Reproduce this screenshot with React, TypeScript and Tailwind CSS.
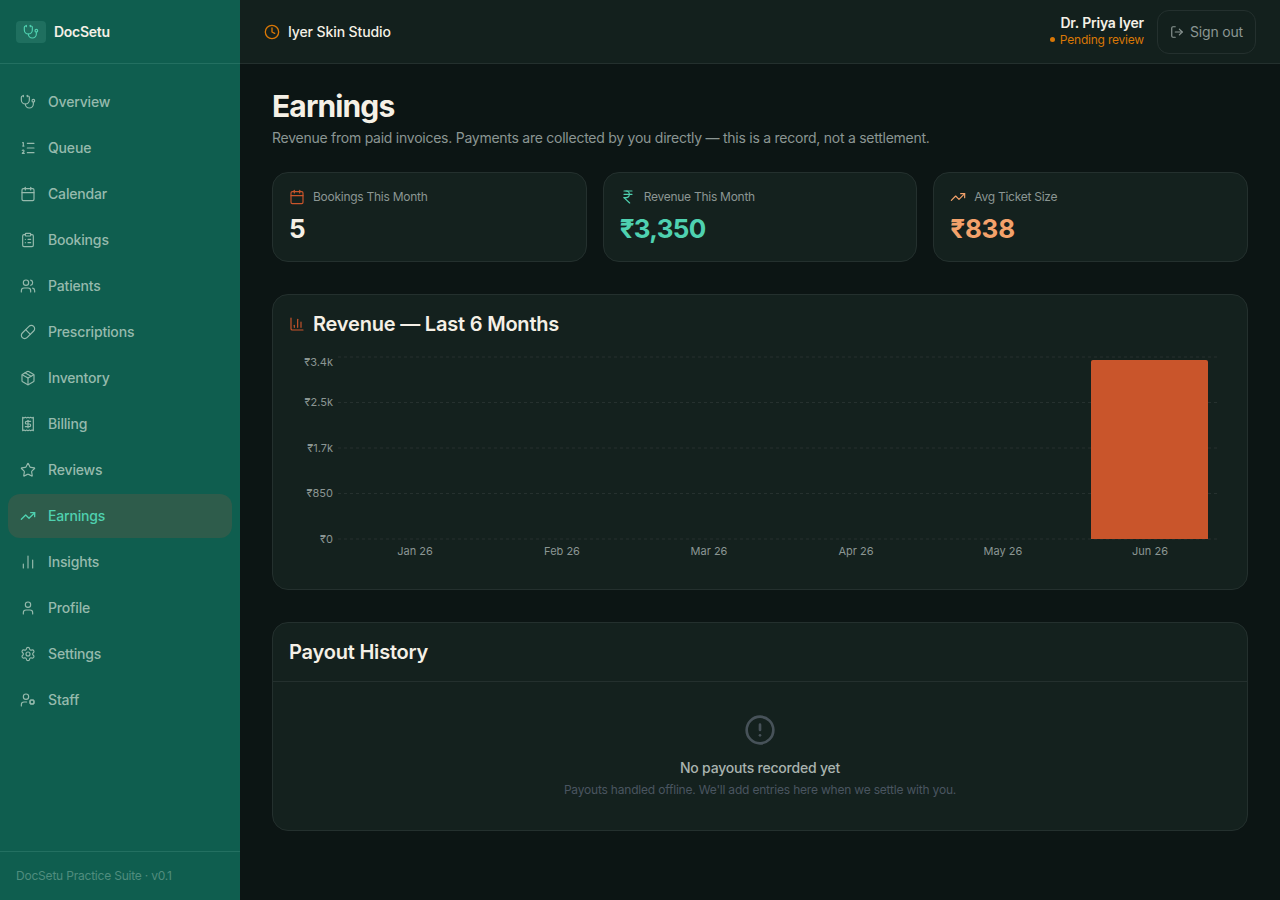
import {
  Calendar,
  ChartColumn,
  ChartNoAxesColumn,
  CircleAlert,
  ClipboardList,
  Clock,
  IndianRupee,
  ListOrdered,
  LogOut,
  Package,
  Pill,
  Receipt,
  Settings,
  Star,
  Stethoscope,
  TrendingUp,
  User,
  UserCog,
  Users,
} from "lucide-react";

const navItems = [
  { label: "Overview", icon: Stethoscope },
  { label: "Queue", icon: ListOrdered },
  { label: "Calendar", icon: Calendar },
  { label: "Bookings", icon: ClipboardList },
  { label: "Patients", icon: Users },
  { label: "Prescriptions", icon: Pill },
  { label: "Inventory", icon: Package },
  { label: "Billing", icon: Receipt },
  { label: "Reviews", icon: Star },
  { label: "Earnings", icon: TrendingUp, active: true },
  { label: "Insights", icon: ChartNoAxesColumn },
  { label: "Profile", icon: User },
  { label: "Settings", icon: Settings },
  { label: "Staff", icon: UserCog },
];

function Sidebar() {
  return (
    <aside className="w-[240px] h-[900px] shrink-0 flex flex-col bg-[#0f5e4f]">
      {/* Logo */}
      <div className="h-[64px] shrink-0 flex items-center gap-2 px-4 border-b border-[#237061]">
        <div className="w-[30px] h-[22px] rounded-[4px] bg-[#1f6f5f] flex items-center justify-center">
          <Stethoscope size={16} strokeWidth={1.75} className="text-[#4fd1b0]" />
        </div>
        <span className="text-sm font-semibold tracking-[-0.02em] text-[#f5f0e6]">DocSetu</span>
      </div>

      {/* Navigation Links */}
      <nav className="flex-1 flex flex-col gap-[2px] px-2 py-4">
        {navItems.map((item) => {
          const Icon = item.icon;
          return (
            <div
              key={item.label}
              className={
                item.active
                  ? "h-[44px] flex items-center gap-3 px-3 rounded-xl bg-[#2e5c4b] text-[#4fd1b0] text-sm font-medium tracking-[-0.012em]"
                  : "h-[44px] flex items-center gap-3 px-3 rounded-xl text-[#96baad] text-sm font-medium tracking-[-0.012em]"
              }
            >
              <Icon size={16} strokeWidth={item.active ? 2 : 1.75} />
              <span>{item.label}</span>
            </div>
          );
        })}
      </nav>

      <div className="h-[49px] shrink-0 flex items-center px-4 border-t border-[#237061] text-xs tracking-[-0.017em] text-[#4f8d7e]">
        DocSetu Practice Suite · v0.1
      </div>
    </aside>
  );
}

function Header() {
  return (
    <header className="h-[64px] shrink-0 flex items-center justify-between px-6 bg-[#13201d] border-b border-[#24302e]">
      <div className="flex items-center gap-2">
        <Clock size={16} className="text-[#d97706]" />
        <span className="text-sm font-medium tracking-[-0.1px] text-[#f5f0e6]">Iyer Skin Studio</span>
      </div>
      <div className="flex items-center gap-[13px]">
        <div className="flex flex-col items-end -mt-[2px]">
          <span className="text-sm leading-[18px] font-semibold tracking-[-0.015em] text-[#f5f0e6]">Dr. Priya Iyer</span>
          <span className="flex items-center gap-[5px] text-xs leading-[16px] tracking-[-0.018em] text-[#d97706]">
            <span className="w-[5px] h-[5px] rounded-full bg-[#d97706]" />
            Pending review
          </span>
        </div>
        <button className="h-[44px] flex items-center gap-[6px] px-3 rounded-xl border border-[#24302e] text-sm tracking-[-0.012em] text-[#8b9693]">
          <LogOut size={14} />
          Sign out
        </button>
      </div>
    </header>
  );
}

function StatCard({
  icon: Icon,
  iconClass,
  label,
  value,
  valueClass,
}: {
  icon: typeof Calendar;
  iconClass: string;
  label: string;
  value: string;
  valueClass: string;
}) {
  return (
    <div className="h-[90px] flex-1 rounded-2xl bg-[#14211e] border border-[#24302e] px-4 pt-4">
      <div className="h-[15px] flex items-center gap-2">
        <Icon size={16} strokeWidth={1.75} className={iconClass} />
        <span className="text-xs tracking-[-0.022em] text-[#8b9693]">{label}</span>
      </div>
      <div className={"mt-[9px] text-[26px] font-bold leading-8 " + valueClass}>{value}</div>
    </div>
  );
}

const yTicks = [
  { label: "₹3.4k", lineY: 4, textY: 13 },
  { label: "₹2.5k", lineY: 49.5, textY: 53 },
  { label: "₹1.7k", lineY: 95, textY: 99 },
  { label: "₹850", lineY: 140.5, textY: 144 },
  { label: "₹0", lineY: 186, textY: 190 },
];

const months = [
  { label: "Jan 26", x: 142 },
  { label: "Feb 26", x: 289 },
  { label: "Mar 26", x: 436 },
  { label: "Apr 26", x: 583 },
  { label: "May 26", x: 730 },
  { label: "Jun 26", x: 877 },
];

function RevenueChart() {
  return (
    <section className="h-[296px] rounded-2xl bg-[#14211e] border border-[#24302e]">
      <div className="h-[58px] flex items-center gap-2 px-4">
        <ChartColumn size={16} strokeWidth={1.75} className="text-[#c9552b]" />
        <h2 className="text-xl font-semibold tracking-[-0.2px] text-[#f5f0e6]">Revenue — Last 6 Months</h2>
      </div>
      <svg width="974" height="236" viewBox="0 0 974 236" className="block">
        {yTicks.map((t) => (
          <line key={t.label} x1="65" x2="947" y1={t.lineY} y2={t.lineY} stroke="#26312f" strokeDasharray="3 3" />
        ))}
        <path d="M818 186V9a2 2 0 0 1 2-2h113a2 2 0 0 1 2 2v177z" fill="#c9552b" />
        {yTicks.map((t) => (
          <text key={t.label} x="60" y={t.textY} textAnchor="end" fontSize="11" fill="#8b9693" fontFamily="Inter, sans-serif">
            {t.label}
          </text>
        ))}
        {months.map((m) => (
          <text key={m.label} x={m.x} y="202" textAnchor="middle" fontSize="11" fill="#8b9693" fontFamily="Inter, sans-serif">
            {m.label}
          </text>
        ))}
      </svg>
    </section>
  );
}

function PayoutHistory() {
  return (
    <section className="h-[209px] rounded-2xl bg-[#14211e] border border-[#24302e]">
      <div className="h-[59px] flex items-center px-4 border-b border-[#24302e]">
        <h2 className="text-xl font-semibold tracking-[-0.2px] text-[#f5f0e6]">Payout History</h2>
      </div>
      <div className="flex flex-col items-center pt-8">
        <CircleAlert size={32} className="text-[#475259]" />
        <p className="mt-3 text-sm leading-5 font-medium tracking-[-0.015em] text-[#a9b3af]">No payouts recorded yet</p>
        <p className="mt-1 text-xs leading-4 tracking-[-0.0165em] text-[#4a5560]">
          Payouts handled offline. We'll add entries here when we settle with you.
        </p>
      </div>
    </section>
  );
}

export default function App() {
  return (
    <div className="w-[1280px] h-[900px] flex overflow-hidden bg-[#0c1514] font-['Inter',sans-serif]">
      <Sidebar />
      <div className="flex-1 flex flex-col min-w-0">
        <Header />
        <main className="flex-1 px-8 pt-6">
          <h1 className="text-3xl leading-9 font-bold tracking-[-0.875px] text-[#f5f0e6]">Earnings</h1>
          <p className="mt-1 text-sm leading-5 tracking-[-0.018em] text-[#8b9693]">
            Revenue from paid invoices. Payments are collected by you directly — this is a record, not a settlement.
          </p>
          <div className="mt-6 flex gap-4">
            <StatCard icon={Calendar} iconClass="text-[#c9552b]" label="Bookings This Month" value="5" valueClass="text-[#f5f0e6]" />
            <StatCard icon={IndianRupee} iconClass="text-[#4fd1b0]" label="Revenue This Month" value="₹3,350" valueClass="text-[#4fd1b0] tracking-[-0.7px]" />
            <StatCard icon={TrendingUp} iconClass="text-[#f4a26b]" label="Avg Ticket Size" value="₹838" valueClass="text-[#f4a26b] tracking-[-0.25px]" />
          </div>
          <div className="mt-8">
            <RevenueChart />
          </div>
          <div className="mt-8">
            <PayoutHistory />
          </div>
        </main>
      </div>
    </div>
  );
}
